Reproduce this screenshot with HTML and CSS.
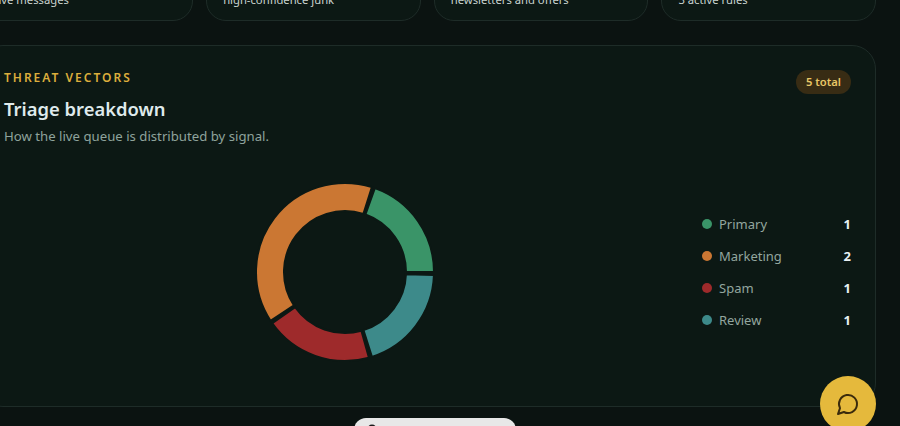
FILE: index.html
```html
<!DOCTYPE html>
<html lang="en">
<head>
<meta charset="utf-8">
<title>Triage breakdown</title>
<link rel="stylesheet" href="styles.css">
</head>
<body>
<div class="page">
  <section class="stats">
    <div class="stat"><p class="stat-note">live messages</p></div>
    <div class="stat"><p class="stat-note">high-confidence junk</p></div>
    <div class="stat"><p class="stat-note">newsletters and offers</p></div>
    <div class="stat"><p class="stat-note">3 active rules</p></div>
  </section>
  <section class="panel">
    <header class="panel-head">
      <div>
        <p class="eyebrow">THREAT VECTORS</p>
        <h2 class="title">Triage breakdown</h2>
        <p class="sub">How the live queue is distributed by signal.</p>
      </div>
      <span class="pill">5 total</span>
    </header>
    <div class="panel-body">
      <div class="chart">
        <svg class="donut" width="180" height="180" viewBox="0 0 180 180" aria-hidden="true">
          <path class="seg seg-primary" d="M179 90A89 89 0 0 0 119.855 6.157L110.462 32.534A61 61 0 0 1 151 90Z"/>
          <path class="seg seg-marketing" d="M116.911 5.166A89 89 0 0 0 15.528 138.733L38.958 123.401A61 61 0 0 1 108.445 31.855Z"/>
          <path class="seg seg-spam" d="M17.275 141.302A89 89 0 0 0 113.934 175.721L106.404 148.753A61 61 0 0 1 40.154 125.162Z"/>
          <path class="seg seg-review" d="M116.911 174.834A89 89 0 0 0 178.946 93.106L150.963 92.129A61 61 0 0 1 108.445 148.145Z"/>
        </svg>
      </div>
      <ul class="legend">
        <li class="legend-row"><span class="dot dot-primary"></span><span class="legend-name">Primary</span><b class="legend-count">1</b></li>
        <li class="legend-row"><span class="dot dot-marketing"></span><span class="legend-name">Marketing</span><b class="legend-count">2</b></li>
        <li class="legend-row"><span class="dot dot-spam"></span><span class="legend-name">Spam</span><b class="legend-count">1</b></li>
        <li class="legend-row"><span class="dot dot-review"></span><span class="legend-name">Review</span><b class="legend-count">1</b></li>
      </ul>
    </div>
  </section>
</div>
<div class="toast">
  <svg class="toast-icon" width="16" height="16" viewBox="0 0 24 24" aria-hidden="true"><path d="M6 8a6 6 0 0 1 12 0c0 7 3 9 3 9H3s3-2 3-9"/><path d="M10.3 21a1.94 1.94 0 0 0 3.4 0"/></svg>
</div>
<button class="fab" type="button" aria-label="Open chat">
  <svg width="24" height="24" viewBox="0 0 24 24" aria-hidden="true"><path d="M7.9 20A9 9 0 1 0 4 16.1L2 22Z"/></svg>
</button>
</body>
</html>
```
FILE: styles.css
```css
* { box-sizing: border-box; }
html, body {
  margin: 0;
  height: 100%;
  overflow: hidden;
  background: #0b1311;
  font-family: "Noto Sans", "Open Sans", sans-serif;
}
.page {
  width: 897px;
  margin: -50px 0 0 -21px;
  display: flex;
  flex-direction: column;
  gap: 24px;
}
.stats {
  display: grid;
  grid-template-columns: repeat(4, 1fr);
  gap: 13px;
  margin-left: -0.5px;
}
.stat {
  height: 71px;
  padding: 41px 16px 0;
  background: #0c1814;
  border: 1px solid #1e2c28;
  border-radius: 20px;
}
.stat-note {
  margin: 0;
  font-size: 11.25px;
  line-height: 16px;
  color: #c9d3cf;
}
.panel {
  height: 362px;
  padding: 24px;
  display: flex;
  flex-direction: column;
  background: #0c1814;
  border: 1px solid #1e2c28;
  border-radius: 24px;
}
.panel-head {
  display: flex;
  justify-content: space-between;
  align-items: flex-start;
}
.eyebrow {
  margin: 0;
  font-size: 12px;
  line-height: 16px;
  font-weight: 600;
  letter-spacing: 2px;
  color: #dcae3c;
}
.title {
  margin: 9px 0 0;
  font-size: 18.4px;
  line-height: 28px;
  font-weight: 600;
  color: #dfeaec;
}
.sub {
  margin: 3px 0 0;
  font-size: 13.2px;
  line-height: 20px;
  color: #8fa39c;
}
.pill {
  padding: 0 10px;
  height: 24px;
  line-height: 24px;
  border-radius: 12px;
  font-size: 11.2px;
  font-weight: 600;
  background: #382c14;
  color: #e9c766;
}
.panel-body {
  flex: 1;
  margin-top: 16px;
  display: flex;
  align-items: center;
  gap: 16px;
}
.chart {
  flex: 1;
  display: flex;
  justify-content: center;
}
.donut { display: block; }
.seg { stroke: #0c1814; stroke-width: 2; }
.seg-primary { fill: #3a9468; }
.seg-marketing { fill: #cb7733; }
.seg-spam { fill: #9e2a2b; }
.seg-review { fill: #3d8a8a; }
.legend {
  width: 149px;
  margin: 0;
  padding: 0;
  list-style: none;
  display: flex;
  flex-direction: column;
}
.legend-row {
  height: 32px;
  display: flex;
  align-items: center;
}
.dot {
  width: 10px;
  height: 10px;
  margin-right: 7px;
  border-radius: 50%;
}
.dot-primary { background: #3a9468; }
.dot-marketing { background: #cb7733; }
.dot-spam { background: #9e2a2b; }
.dot-review { background: #3d8a8a; }
.legend-name {
  flex: 1;
  font-size: 13px;
  color: #93a69f;
}
.legend-count {
  font-size: 13px;
  font-weight: 700;
  color: #e8f0f2;
}
.toast {
  position: fixed;
  left: 354px;
  top: 418px;
  width: 162px;
  height: 44px;
  padding: 6px 10px;
  background: #e8e8e8;
  border-radius: 12px;
}
.toast-icon {
  display: block;
  fill: none;
  stroke: #1c1c1c;
  stroke-width: 2.4;
}
.fab {
  position: fixed;
  left: 820px;
  top: 376px;
  width: 56px;
  height: 56px;
  padding: 0;
  display: flex;
  align-items: center;
  justify-content: center;
  border: 0;
  border-radius: 50%;
  background: #e5b93c;
}
.fab svg {
  fill: none;
  stroke: #3a2a0c;
  stroke-width: 2;
  stroke-linecap: round;
  stroke-linejoin: round;
}
```
